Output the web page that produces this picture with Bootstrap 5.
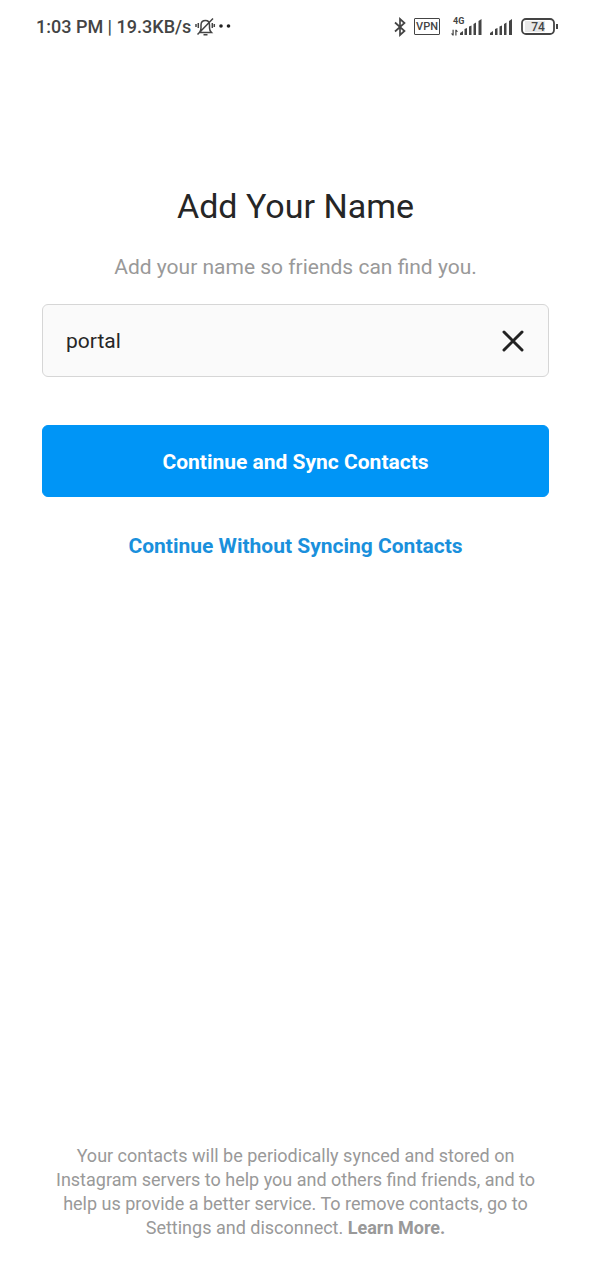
<!DOCTYPE html>
<html lang="en">
<head>
<meta charset="utf-8">
<meta name="viewport" content="width=device-width, initial-scale=1">
<title>Add Your Name</title>
<link href="https://cdn.jsdelivr.net/npm/bootstrap@5.3.0/dist/css/bootstrap.min.css" rel="stylesheet">
<style>
  body { font-family: Roboto, "Liberation Sans", sans-serif; color: #262626; background: #fff; }
  .status { height: 52px; padding: 1px 33px 0 36px; color: #444; font-size: 18px; font-weight: 500; line-height: 24px; }
  .status svg { display: block; }
  .vpn-tag { width: 26px; height: 17px; border: 1px solid #444; border-radius: 1px; font-size: 11px; line-height: 16px; }
  .page { padding: 0 42px 40px; }
  .intro { padding-top: 132px; }
  .title { font-size: 34px; line-height: 44px; font-weight: 400; margin-bottom: 25px; }
  .hint { font-size: 21px; line-height: 28px; color: #999; margin-bottom: 23px; }
  .name-box { height: 73px; border: 1px solid #d6d6d6; border-radius: 6px; background: #fafafa; padding: 0 23px; margin-bottom: 48px; }
  .name-box input { font-size: 21px; line-height: 28px; color: #262626; }
  .name-box input:focus { box-shadow: none; }
  .sync { height: 72px; border-radius: 6px; font-size: 21px; line-height: 28px; font-weight: 700; padding: 8px 12px 6px; margin-bottom: 32px;
    --bs-btn-bg: #0095f6; --bs-btn-border-color: #0095f6; --bs-btn-hover-bg: #0086dd; --bs-btn-hover-border-color: #0086dd; }
  .skip { font-size: 21px; line-height: 28px; font-weight: 700; color: #1a90dc; border: 0; padding: 3px 12px; }
  .legal { font-size: 18px; line-height: 24px; color: #999; }
</style>
</head>
<body class="min-vh-100 d-flex flex-column">
<header class="status d-flex align-items-center justify-content-between flex-shrink-0">
  <div class="d-flex align-items-center">
    <span>1:03 PM | 19.3KB/s</span>
    <svg class="ms-1" width="38" height="20" viewBox="0 0 38 20" fill="none" stroke="#444" stroke-width="1.5" aria-label="Muted, more notifications">
      <path d="M4.500 15.500h12c-1.500-1.500-2-2.500-2-4.500V8c0-3-1.500-4.500-4-4.500S6 5 6 8v3c0 2-.3 3-1.500 4.500zM8.500 17.800h4M18 1.500L2.500 17.500M3.300 6v5M1 7v3M17.300 6v5M19.300 7v3"/>
      <circle cx="26" cy="9" r="1.800" fill="#222" stroke="none"/><circle cx="33.500" cy="9" r="1.800" fill="#222" stroke="none"/>
    </svg>
  </div>
  <div class="d-flex align-items-center">
    <svg width="12" height="20" viewBox="0 0 12 20" fill="none" stroke="#444" stroke-width="1.700" aria-label="Bluetooth"><path d="M1 5.500l9.500 8.500L6 18V2l4.500 4L1 14.500"/></svg>
    <span class="vpn-tag d-flex justify-content-center ms-2">VPN</span>
    <svg class="ms-2" width="35" height="20" viewBox="0 0 35 20" fill="#444" aria-label="4G signal">
      <text x="5" y="7" font-size="9" font-weight="700" font-family="Roboto, sans-serif">4G</text>
      <path d="M4 11h1.500v7H4l-2-2.500h2zM7.500 18v-7H9l2 2.500H9V18z" transform="translate(1.300 4) scale(.8)"/>
      <path d="M12 18v-2l3-2v4zM16.500 18v-6l2.500-1v7zM21 18V9.500l2.500-1V18zM25.500 18V7L28 5.500V18zM30.500 18V4l3-2v16z"/>
    </svg>
    <svg class="ms-1" width="26" height="20" viewBox="0 0 26 20" fill="#444" aria-label="Signal"><path d="M3 18v-2l3-2v4zM8 18v-6l2.500-1v7zM12.500 18V9.500l2.500-1V18zM17 18V7l2.500-1.500V18zM22 18V4l3-2v16z"/></svg>
    <svg class="ms-2" width="37" height="20" viewBox="0 0 37 20" aria-label="Battery 74%">
      <rect x="4" y="4" width="20" height="11" fill="#e8e8e8"/><rect x="1" y="2" width="32" height="15" rx="4" fill="none" stroke="#444" stroke-width="1.800"/>
      <path d="M35 7h2v5h-2z" fill="#444"/>
      <text x="17" y="14" font-size="12" font-weight="500" text-anchor="middle" font-family="Roboto, sans-serif" fill="#444">74</text>
    </svg>
  </div>
</header>
<main class="page flex-grow-1 d-flex flex-column text-center">
  <form class="intro d-flex flex-column">
    <h1 class="title">Add Your Name</h1>
    <label class="hint" for="name">Add your name so friends can find you.</label>
    <div class="name-box d-flex align-items-center">
      <input id="name" type="text" class="form-control border-0 bg-transparent p-0" value="portal">
      <button type="button" class="btn border-0 p-0 flex-shrink-0" aria-label="Clear name">
        <svg class="d-block" width="24" height="24" viewBox="0 0 24 24" stroke="#222" stroke-width="3" stroke-linecap="round"><path d="M3 3l18 18M21 3L3 21"/></svg>
      </button>
    </div>
    <button type="submit" class="btn btn-primary sync">Continue and Sync Contacts</button>
    <button type="button" class="btn skip align-self-center">Continue Without Syncing Contacts</button>
  </form>
  <p class="legal mt-auto mb-0">Your contacts will be periodically synced and stored on Instagram servers to help you and others find friends, and to help us provide a better service. To remove contacts, go to Settings and disconnect. <a href="#" class="fw-bold text-reset text-decoration-none">Learn More.</a></p>
</main>
<script src="https://cdn.jsdelivr.net/npm/bootstrap@5.3.0/dist/js/bootstrap.bundle.min.js"></script>
</body>
</html>
